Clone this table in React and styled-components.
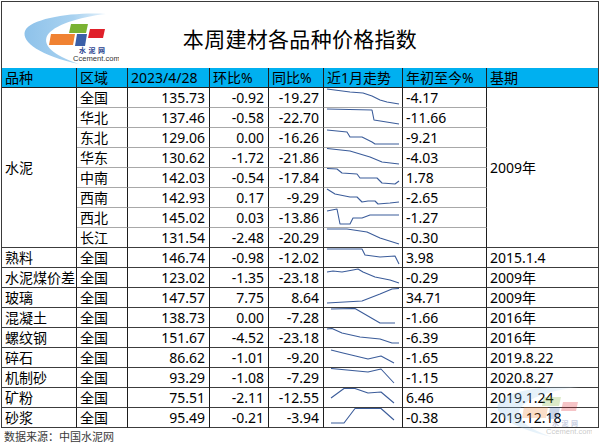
import React from "react";
import styled, { createGlobalStyle } from "styled-components";

const Global = createGlobalStyle`
  html, body { margin: 0; padding: 0; background: #fff; }
  body { font-family: "Noto Sans", "Noto Sans CJK SC", sans-serif; }
`;

const Page = styled.div`
  position: relative;
  width: 600px;
  height: 444px;
  overflow: hidden;
  padding: 1px 0 0 1px;
  box-sizing: border-box;
`;

const Frame = styled.div`
  width: 598px;
  box-sizing: border-box;
  border: 1px solid #3a3a3a;
  border-bottom: none;
`;

const TitleBar = styled.div`
  display: grid;
  grid-template-columns: 1fr auto 1fr;
  align-items: center;
  height: 66px;
`;

const LogoBox = styled.div`
  padding: 7px 0 0 17px;
  align-self: start;
`;

const Title = styled.h1`
  margin: 0;
  font-family: "Noto Sans CJK SC", sans-serif;
  font-weight: 400;
  font-size: 21px;
  color: #000;
  letter-spacing: 0.3px;
  padding-top: 2px;
`;

const Grid = styled.div`
  display: grid;
  grid-template-columns: 75px 51px 82px 59px 55px 79px 84px 111px;
  grid-auto-rows: 20px;
`;

const Cell = styled.div`
  box-sizing: border-box;
  display: flex;
  align-items: center;
  justify-content: ${(p) => (p.$align === "right" ? "flex-end" : "flex-start")};
  padding: ${(p) => (p.$align === "right" ? "0 4px 0 2px" : "0 2px 0 3px")};
  border-right: ${(p) => (p.$last ? "none" : "1px solid #1e1e1e")};
  border-bottom: 1px solid ${(p) => (p.$soft ? "#a8a8a8" : "#3c3c3c")};
  grid-row: ${(p) => (p.$span ? `span ${p.$span}` : "auto")};
  background: ${(p) => (p.$head ? "#00b0f0" : "#fff")};
  font-size: 14px;
  line-height: 19px;
  color: #000;
  white-space: nowrap;
  overflow: hidden;
`;

const HeadCell = styled(Cell)`
  border-bottom-color: #1e1e1e;
`;

const SparkCell = styled(Cell)`
  padding: 0;
  align-items: flex-start;
`;

const Footer = styled.div`
  padding: 2px 0 0 3px;
  font-family: "Noto Sans CJK SC", sans-serif;
  font-size: 11px;
  line-height: 13px;
  color: #3a3a3a;
`;

const Watermark = styled.div`
  position: absolute;
  left: 492px;
  top: 382px;
  opacity: 0.26;
  pointer-events: none;
`;

function Logo() {
  return (
    <svg width="100" height="58" viewBox="0 0 100 58">
      <defs>
        <linearGradient id="sw" x1="0" y1="0" x2="1" y2="0">
          <stop offset="0" stopColor="#8ec2ea" />
          <stop offset="0.6" stopColor="#a9d2f0" />
          <stop offset="1" stopColor="#e4f1fb" />
        </linearGradient>
      </defs>
      <path
        d="M87 5 C55 3 12 9 6 22 C2 33 22 47 60 55 C33 46 24 36 28 27 C34 16 60 8 87 5 Z"
        fill="url(#sw)"
      />
      <polygon points="52,15 69,15 67,24 50,24" fill="#7ab232" />
      <polygon points="32,25 56,25 54,36 30,36" fill="#f08232" />
      <polygon points="58,25 68,25 66,37 56,37" fill="#3a5fa8" />
      <polygon points="71,20 86,20 84,29 69,29" fill="#e0202a" />
      <text
        x="60"
        y="43.5"
        fontSize="7"
        fontWeight="700"
        fill="#1f3f8f"
        fontFamily="'Noto Sans CJK SC', sans-serif"
        letterSpacing="2.5"
      >
        水泥网
      </text>
      <text x="54" y="52" fontSize="7.6" fill="#333" fontFamily="'Liberation Sans', sans-serif">
        Ccement.com
      </text>
    </svg>
  );
}

function Spark({ pts }) {
  return (
    <svg width="78" height="19" viewBox="0 0 78 19" style={{ display: "block" }}>
      <polyline
        points={pts.map((p) => p.join(",")).join(" ")}
        fill="none"
        stroke="#3b5c9a"
        strokeWidth="1.1"
        strokeLinejoin="round"
      />
    </svg>
  );
}

const cement = [
  ["全国", "135.73", "-0.92", "-19.27", "-4.17", [[3,1],[26,4],[39,5],[48,8],[56,12],[63,14],[75,16]]],
  ["华北", "137.46", "-0.58", "-22.70", "-11.66", [[3,1],[48,2],[50,12],[75,16]]],
  ["东北", "129.06", "0.00", "-16.26", "-9.21", [[3,2],[23,4],[26,9],[38,9],[48,14],[51,16],[75,16]]],
  ["华东", "130.62", "-1.72", "-21.86", "-4.03", [[3,0.5],[26,3],[46,9],[58,14],[75,16]]],
  ["中南", "142.03", "-0.54", "-17.84", "1.78", [[3,0.5],[13,1],[18,5],[33,6],[36,10],[53,10],[58,15],[71,16],[75,13]]],
  ["西南", "142.93", "0.17", "-9.29", "-2.65", [[3,1],[11,6],[26,9],[33,9],[38,14],[44,13],[51,13],[54,16],[66,15],[75,14]]],
  ["西北", "145.02", "0.03", "-13.86", "-1.27", [[3,3],[13,1],[16,16],[26,16],[29,10],[38,10],[46,7],[75,7]]],
  ["长江", "131.54", "-2.48", "-20.29", "-0.30", [[3,1],[23,1],[43,4],[56,10],[75,16]]],
];

const others = [
  ["熟料", "146.74", "-0.98", "-12.02", "3.98", "2015.1.4", [[3,1],[38,1],[41,7],[56,9],[71,8],[75,16]]],
  ["水泥煤价差", "123.02", "-1.35", "-23.18", "-0.29", "2009年", [[3,4],[9,3],[18,4],[29,2],[34,1],[39,4],[51,9],[66,12],[75,15]]],
  ["玻璃", "147.57", "7.75", "8.64", "34.71", "2009年", [[3,15],[38,13],[56,6],[68,1],[75,0.5]]],
  ["混凝土", "138.73", "0.00", "-7.28", "-1.66", "2016年", [[7,1],[31,0.5],[56,15],[71,15]]],
  ["螺纹钢", "151.67", "-4.52", "-23.18", "-6.39", "2016年", [[3,1],[8,0.5],[18,5],[36,9],[56,11],[68,15],[75,15]]],
  ["碎石", "86.62", "-1.01", "-9.20", "-1.65", "2019.8.22", [[7,2],[19,5],[44,11],[57,8],[70,15]]],
  ["机制砂", "93.29", "-1.08", "-7.29", "-1.15", "2020.8.27", [[7,0.5],[44,4],[57,1],[70,15]]],
  ["矿粉", "75.51", "-2.11", "-12.55", "6.46", "2019.1.24", [[7,10],[20,0.5],[31,0.5],[44,5],[57,4],[70,15]]],
  ["砂浆", "95.49", "-0.21", "-3.94", "-0.38", "2019.12.18", [[7,15],[20,15],[31,0.5],[57,0.5],[70,12]]],
];

const heads = ["品种", "区域", "2023/4/28", "环比%", "同比%", "近1月走势", "年初至今%", "基期"];

export default function App() {
  return (
    <>
      <Global />
      <Page>
        <Frame>
          <TitleBar>
            <LogoBox>
              <Logo />
            </LogoBox>
            <Title>本周建材各品种价格指数</Title>
            <div />
          </TitleBar>
          <Grid>
            {heads.map((h, i) => (
              <HeadCell key={h} $head $last={i === heads.length - 1}>
                {h}
              </HeadCell>
            ))}
            {cement.map((r, i) => {
              const soft = i < cement.length - 1;
              return (
                <React.Fragment key={r[0]}>
                  {i === 0 && <Cell $span={8}>水泥</Cell>}
                  <Cell $soft={soft}>{r[0]}</Cell>
                  <Cell $soft={soft} $align="right">{r[1]}</Cell>
                  <Cell $soft={soft} $align="right">{r[2]}</Cell>
                  <Cell $soft={soft} $align="right">{r[3]}</Cell>
                  <SparkCell $soft={soft}>
                    <Spark pts={r[5]} />
                  </SparkCell>
                  <Cell $soft={soft}>{r[4]}</Cell>
                  {i === 0 && (
                    <Cell $span={8} $last>
                      2009年
                    </Cell>
                  )}
                </React.Fragment>
              );
            })}
            {others.map((r) => (
              <React.Fragment key={r[0]}>
                <Cell>{r[0]}</Cell>
                <Cell>全国</Cell>
                <Cell $align="right">{r[1]}</Cell>
                <Cell $align="right">{r[2]}</Cell>
                <Cell $align="right">{r[3]}</Cell>
                <SparkCell>
                  <Spark pts={r[6]} />
                </SparkCell>
                <Cell>{r[4]}</Cell>
                <Cell $last>{r[5]}</Cell>
              </React.Fragment>
            ))}
          </Grid>
        </Frame>
        <Footer>数据来源：中国水泥网</Footer>
        <Watermark>
          <Logo />
        </Watermark>
      </Page>
    </>
  );
}
